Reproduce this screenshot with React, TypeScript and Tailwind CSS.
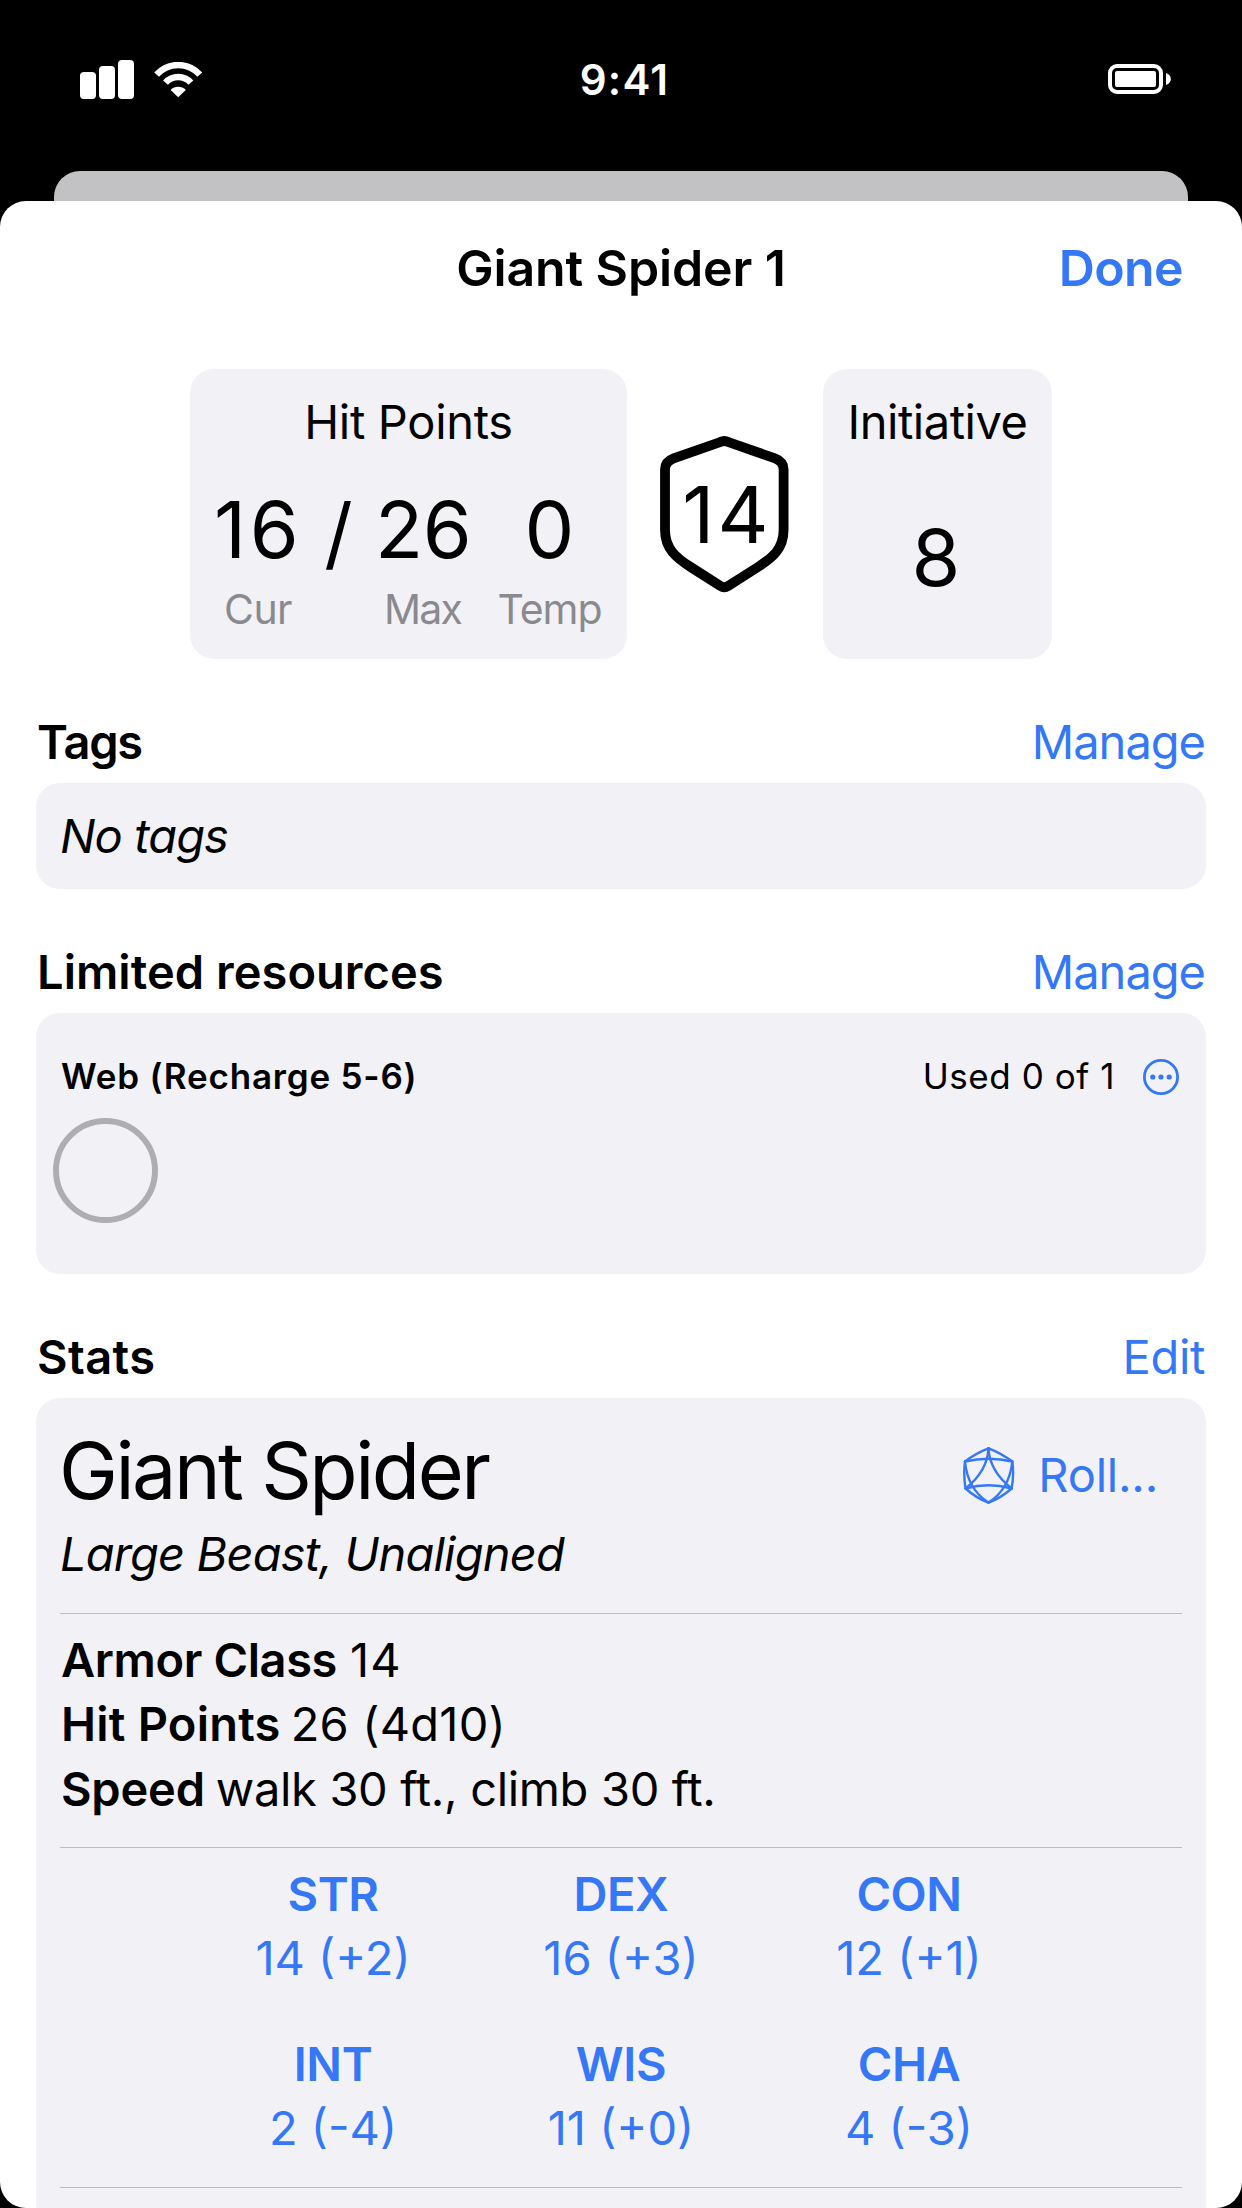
import type { ReactNode } from "react";

function SignalBars() {
  return (
    <div className="flex items-end gap-[3px]">
      <div className="h-[27px] w-4 rounded-[4px] bg-white" />
      <div className="h-[33px] w-4 rounded-[4px] bg-white" />
      <div className="h-[39px] w-4 rounded-[4px] bg-white" />
    </div>
  );
}

function WifiIcon() {
  return (
    <svg width="49" height="36" viewBox="0 0 49 36" fill="none" stroke="white" strokeWidth="6.5">
      <path d="M2.6 12.7 A29 29 0 0 1 45.8 12.7" />
      <path d="M11.5 20.7 A17 17 0 0 1 36.9 20.7" />
      <path d="M24.2 35.2 L16.6 28 A10.6 10.6 0 0 1 31.8 28 Z" fill="white" stroke="none" />
    </svg>
  );
}

function BatteryIcon() {
  return (
    <div className="flex items-center gap-[3px]">
      <div className="h-[30px] w-[55px] rounded-[9px] border-[4.6px] border-white p-[3px]">
        <div className="h-full w-full rounded-[2px] bg-white" />
      </div>
      <svg width="5" height="12" viewBox="0 0 5 12">
        <path d="M0 0 C6.5 2 6.5 10 0 12 Z" fill="white" />
      </svg>
    </div>
  );
}

function ShieldIcon() {
  return (
    <svg width="129" height="157" viewBox="0 0 129 157" fill="none" stroke="black" strokeWidth="9.8">
      <path d="M60.3 6 Q64.3 4 68.3 6 L115 22.4 Q123.6 25.6 123.6 33.5 V94 C123.6 113 112 122 98 131 L68 150 Q64.3 152.6 60.6 150 L30.6 131 C16.6 122 5 113 5 94 V33.5 Q5 25.6 13.6 22.4 Z" />
    </svg>
  );
}

function D20Icon() {
  return (
    <svg
      width="52"
      height="57"
      viewBox="0 0 52 57"
      fill="none"
      stroke="#3478f7"
      strokeWidth="2.4"
      strokeLinejoin="round"
      strokeLinecap="round"
    >
      <path d="M25.5 1.3 Q38 6 49.3 14.5 Q51.2 28 48.6 41.5 Q38 51 25.5 55.6 Q13 51 2.6 41.5 Q.2 28 2 14.5 Q13 6 25.5 1.3 Z" />
      <path d="M2 14.5 Q25.5 9 49.3 14.5" />
      <path d="M2.6 41.5 Q25.5 35 48.6 41.5" />
      <path d="M25.5 1.3 Q24.5 24 2.6 41.5" />
      <path d="M25.5 1.3 Q26.5 24 48.6 41.5" />
      <path d="M2 14.5 Q4.5 42 25.5 55.6" />
      <path d="M49.3 14.5 Q46.5 42 25.5 55.6" />
    </svg>
  );
}

function MoreIcon() {
  return (
    <svg width="36" height="36" viewBox="0 0 36 36">
      <circle cx="18" cy="18" r="16.6" fill="none" stroke="#3478f7" strokeWidth="2.8" />
      <circle cx="9.8" cy="18" r="2.6" fill="#3478f7" />
      <circle cx="18" cy="18" r="2.6" fill="#3478f7" />
      <circle cx="26.2" cy="18" r="2.6" fill="#3478f7" />
    </svg>
  );
}

function SectionHeader({ title, action }: { title: ReactNode; action: ReactNode }) {
  return (
    <div className="mt-[54px] mb-3 flex justify-between px-px text-[47px] leading-[58px]">
      <h2 className="font-semibold">{title}</h2>
      <button className="text-[#3478f7]">{action}</button>
    </div>
  );
}

function Divider() {
  return <div className="mx-6 h-px bg-[#bcbcc0]" />;
}

function Ability({ name, value }: { name: ReactNode; value: ReactNode }) {
  return (
    <div className="flex flex-col items-center">
      <span className="font-semibold tracking-[-0.4px]">{name}</span>
      <span>{value}</span>
    </div>
  );
}

export default function App() {
  return (
    <div className="flex h-[2208px] w-[1242px] flex-col overflow-hidden bg-black font-['Inter',sans-serif] whitespace-nowrap text-black">
      <div className="mb-[13px] grid h-[158px] grid-cols-3 items-center pr-[71px] pl-20">
        <div className="flex items-center gap-[20px] pt-px">
          <SignalBars />
          <WifiIcon />
        </div>
        <div className="pt-px pr-[2px] text-center text-[42px] leading-[50px] font-semibold tracking-[1.2px] text-white">
          9:41
        </div>
        <div className="flex justify-end">
          <BatteryIcon />
        </div>
      </div>
      <div className="mx-[54px] h-[30px] rounded-t-[26px] bg-[#c2c2c4]" />

      <div className="h-[2007px] overflow-hidden rounded-[26px] bg-white px-9">
        <div className="grid h-[134px] grid-cols-3 items-center text-[50px] leading-[60px] font-semibold">
          <span />
          <h1 className="text-center tracking-[-0.12px]">Giant Spider 1</h1>
          <button className="pr-[23px] text-right tracking-[-0.6px] text-[#3478f7]">Done</button>
        </div>

        <div className="mt-[34px] flex h-[290px] justify-center">
          <div className="w-[437px] rounded-[24px] bg-[#f2f1f6] pt-6">
            <div className="text-center text-[47px] leading-[58px] tracking-[-0.32px]">Hit Points</div>
            <div className="mt-8 grid grid-cols-[88px_73px_97px_24px_109px] px-6 text-center text-[79px] leading-[92px]">
              <span className="pr-px tracking-[3.5px]">16</span>
              <span className="translate-y-[3px]">/</span>
              <span className="pr-[2px] tracking-[-0.5px]">26</span>
              <span />
              <span className="pr-[2px]">0</span>
            </div>
            <div className="mt-[9px] grid grid-cols-[88px_73px_97px_24px_109px] px-6 text-center text-[41px] leading-[50px] text-[#8a8a8e]">
              <span className="tracking-[-0.6px]">Cur</span>
              <span />
              <span className="pr-[2px] tracking-[-1.8px]">Max</span>
              <span />
              <span className="pr-[2px] tracking-[-1px]">Temp</span>
            </div>
          </div>

          <div className="mr-[34px] ml-[33px] grid w-[129px] place-items-center">
            <div className="col-start-1 row-start-1">
              <ShieldIcon />
            </div>
            <span className="col-start-1 row-start-1 pl-[5px] text-[79px] leading-[92px] tracking-[3.2px]">14</span>
          </div>

          <div className="w-[229px] rounded-[24px] bg-[#f2f1f6] pt-6 text-center">
            <div className="text-[47px] leading-[58px] tracking-[-0.46px]">Initiative</div>
            <div className="mt-[60px] pr-[3px] text-[79px] leading-[92px]">8</div>
          </div>
        </div>

        <SectionHeader
          title={<span className="tracking-[-1.2px]">Tags</span>}
          action={<span className="tracking-[-1px]">Manage</span>}
        />
        <div className="flex h-[106px] items-center rounded-[24px] bg-[#f2f1f6] px-6 text-[47px] tracking-[-0.9px] italic">
          No tags
        </div>

        <SectionHeader
          title={<span className="tracking-[0.05px]">Limited resources</span>}
          action={<span className="tracking-[-1px]">Manage</span>}
        />
        <div className="h-[261px] rounded-[24px] bg-[#f2f1f6] pt-[42px]">
          <div className="flex h-11 items-center pr-[27px] pl-[25px] text-[35px] leading-[44px]">
            <span className="mr-auto -translate-y-px font-semibold tracking-[0.8px]">Web (Recharge 5-6)</span>
            <span className="mr-7 -translate-y-px tracking-[0.56px]">Used 0 of 1</span>
            <MoreIcon />
          </div>
          <div className="mt-[19px] ml-[17px] size-[105px] rounded-full border-[6px] border-[#aeaeb2]" />
        </div>

        <SectionHeader
          title={<span className="tracking-[0.4px]">Stats</span>}
          action={<span className="tracking-[-0.34px]">Edit</span>}
        />
        <div className="h-[900px] rounded-t-[24px] bg-[#f2f1f6] pt-[26px] text-[47px]">
          <div className="flex justify-between pr-12 pl-6">
            <div>
              <div className="-ml-px text-[79px] leading-[92px] tracking-[-2.5px]">Giant Spider</div>
              <div className="mt-[9px] mb-[30px] leading-[58px] tracking-[-0.82px] italic">
                Large Beast, Unaligned
              </div>
            </div>
            <button className="mt-[22px] flex h-[58px] items-center gap-[23px] leading-[58px] text-[#3478f7]">
              <D20Icon />
              <span className="tracking-[-0.21px]">Roll...</span>
            </button>
          </div>
          <Divider />
          <div className="mt-[14px] mb-[26px] pl-[25px] leading-[64.33px]">
            <div className="flex">
              <b className="font-semibold tracking-[-0.39px]">Armor Class</b>
              <span className="ml-[13px] tracking-[1.2px]">14</span>
            </div>
            <div className="flex">
              <b className="font-semibold tracking-[0.22px]">Hit Points</b>
              <span className="ml-[10px] tracking-[0.23px]">26 (4d10)</span>
            </div>
            <div className="flex">
              <b className="font-semibold tracking-[-0.2px]">Speed</b>
              <span className="ml-[11px] tracking-[-0.33px]">walk 30 ft., climb 30 ft.</span>
            </div>
          </div>
          <Divider />
          <div className="mt-[14px] mb-[27px] grid grid-cols-[repeat(3,288px)] justify-center gap-y-[42px] leading-[64px] text-[#3478f7]">
            <Ability name="STR" value="14 (+2)" />
            <Ability name="DEX" value="16 (+3)" />
            <Ability name="CON" value="12 (+1)" />
            <Ability name="INT" value="2 (-4)" />
            <Ability name="WIS" value="11 (+0)" />
            <Ability name="CHA" value="4 (-3)" />
          </div>
          <Divider />
        </div>
      </div>
    </div>
  );
}
